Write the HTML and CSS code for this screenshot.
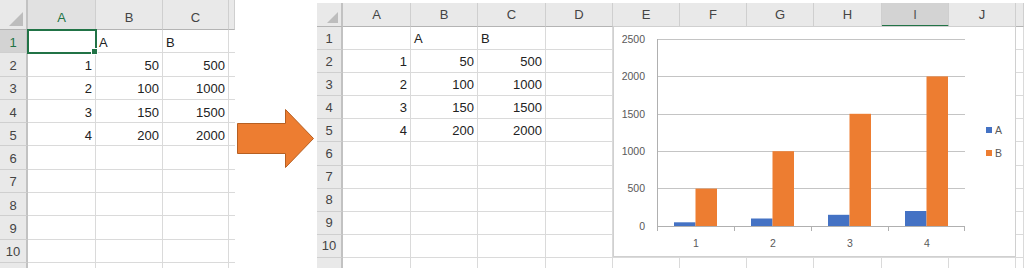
FILE: index.html
```html
<!DOCTYPE html>
<html lang="ja">
<head>
    <meta charset="UTF-8">
    <title>グラフの作成</title>
    <link rel="stylesheet" href="styles.css">
</head>
<body>
    <div class="page">
        <!-- 元のシート -->
        <div class="sheet sheet-before" id="sheet-before"></div>

        <!-- 矢印 -->
        <div class="gap">
            <svg width="82" height="268" viewBox="0 0 82 268">
                <path d="M2.5 123.5 H50.5 V109.5 L78.5 138.5 L50.5 167.5 V153.5 H2.5 Z" fill="#ed7d31" stroke="#b65f22" stroke-width="1"/>
            </svg>
        </div>

        <!-- グラフ付きのシート -->
        <div class="sheet sheet-after" id="sheet-after">
            <div class="chart">
                <svg width="403" height="231" viewBox="0 0 403 231">
                    <g class="grid">
                        <line x1="44" y1="13.5" x2="352" y2="13.5"/>
                        <line x1="44" y1="50.5" x2="352" y2="50.5"/>
                        <line x1="44" y1="88.5" x2="352" y2="88.5"/>
                        <line x1="44" y1="125.5" x2="352" y2="125.5"/>
                        <line x1="44" y1="162.5" x2="352" y2="162.5"/>
                    </g>
                    <g class="axis">
                        <line x1="44.5" y1="13" x2="44.5" y2="200"/>
                        <line x1="44" y1="200.5" x2="352" y2="200.5"/>
                        <line x1="44.5" y1="200" x2="44.5" y2="205"/>
                        <line x1="121.5" y1="200" x2="121.5" y2="205"/>
                        <line x1="198.5" y1="200" x2="198.5" y2="205"/>
                        <line x1="275.5" y1="200" x2="275.5" y2="205"/>
                        <line x1="351.5" y1="200" x2="351.5" y2="205"/>
                    </g>
                    <g class="bars-a">
                        <rect x="61" y="196.3" width="21.5" height="3.7"/>
                        <rect x="138" y="192.5" width="21.5" height="7.5"/>
                        <rect x="215" y="188.8" width="21.5" height="11.2"/>
                        <rect x="292" y="185" width="21.5" height="15"/>
                    </g>
                    <g class="bars-b">
                        <rect x="82.5" y="162.6" width="21.5" height="37.4"/>
                        <rect x="159.5" y="125.2" width="21.5" height="74.8"/>
                        <rect x="236.5" y="87.8" width="21.5" height="112.2"/>
                        <rect x="313.5" y="50.4" width="21.5" height="149.6"/>
                    </g>
                    <g class="labels-y">
                        <text x="32" y="17">2500</text>
                        <text x="32" y="54">2000</text>
                        <text x="32" y="92">1500</text>
                        <text x="32" y="129">1000</text>
                        <text x="32" y="166">500</text>
                        <text x="32" y="204">0</text>
                    </g>
                    <g class="labels-x">
                        <text x="83" y="221">1</text>
                        <text x="160" y="221">2</text>
                        <text x="237" y="221">3</text>
                        <text x="314" y="221">4</text>
                    </g>
                    <g class="legend">
                        <rect class="key-a" x="373" y="101" width="6" height="6"/>
                        <text x="382" y="108">A</text>
                        <rect class="key-b" x="373" y="124" width="6" height="6"/>
                        <text x="382" y="131">B</text>
                    </g>
                </svg>
            </div>
        </div>
    </div>

    <script>
        // Построение листов
        const letters = 'ABCDEFGHIJK'.split('');
        const data = [
            ['', 'A', 'B'],
            [1, 50, 500],
            [2, 100, 1000],
            [3, 150, 1500],
            [4, 200, 2000]
        ];

        function makeCell(cls, text) {
            const div = document.createElement('div');
            div.className = cls;
            if (text !== undefined && text !== '') div.textContent = text;
            return div;
        }

        // rowCount строк с номерами + одна обрезанная строка снизу
        function buildSheet(sheet, colCount, labelCount, rowCount, opts) {
            const frag = document.createDocumentFragment();
            frag.appendChild(makeCell('hd corner'));
            for (let c = 0; c < colCount; c++) {
                let cls = 'hd col-hd';
                if (opts.selCol === c) cls += ' sel';
                frag.appendChild(makeCell(cls, c < labelCount ? letters[c] : ''));
            }
            for (let r = 1; r <= rowCount + 1; r++) {
                let cls = 'hd row-hd';
                if (opts.selRow === r) cls += ' sel';
                frag.appendChild(makeCell(cls, r <= rowCount ? r : ''));
                const row = data[r - 1] || [];
                for (let c = 0; c < colCount; c++) {
                    const value = row[c];
                    let cellCls = 'cell';
                    if (typeof value === 'number') cellCls += ' num';
                    if (opts.active && opts.active[0] === r && opts.active[1] === c) cellCls += ' active';
                    frag.appendChild(makeCell(cellCls, value));
                }
            }
            // график должен остаться поверх ячеек
            sheet.insertBefore(frag, sheet.firstChild);
        }

        buildSheet(document.getElementById('sheet-before'), 4, 3, 10, { selCol: 0, selRow: 1, active: [1, 0] });
        buildSheet(document.getElementById('sheet-after'), 11, 10, 10, { selCol: 8 });
    </script>
</body>
</html>
```

FILE: styles.css
```css
/* Основные стили */
body {
    margin: 0;
    background: #fff;
    font-family: 'Liberation Sans', Arial, sans-serif;
    color: #222;
}

.page {
    display: flex;
    width: 1024px;
    height: 268px;
    overflow: hidden;
}

/* Листы */
.sheet {
    display: grid;
    position: relative;
    overflow: hidden;
    font-size: 13px;
}

.sheet-before {
    width: 235px;
    height: 268px;
    grid-template-columns: 28px 68px 67px 66px 6px;
    grid-template-rows: 30px;
    grid-auto-rows: 23.3px;
}

.sheet-after {
    width: 707px;
    height: 265px;
    margin-top: 3px;
    grid-template-columns: 26px 68px 67px 68px 67px 67px 67px 67px 68px 67px 67px 8px;
    grid-template-rows: 24px;
    grid-auto-rows: 23.1px;
}

.gap {
    width: 82px;
    flex-shrink: 0;
}

.gap svg {
    display: block;
}

/* Заголовки */
.hd {
    box-sizing: border-box;
    display: flex;
    align-items: center;
    justify-content: center;
    background: #e9e9e9;
    color: #444;
    border-right: 1px solid #cfcfcf;
    border-bottom: 1px solid #cfcfcf;
}

.col-hd {
    border-bottom: 1px solid #b4b4b4;
}

.sheet-before .col-hd {
    padding-top: 6px;
}

.sheet-before .row-hd {
    padding-top: 2px;
}

.row-hd {
    border-right: 2px solid #c2c2c2;
}

.corner {
    position: relative;
    border-bottom: 1px solid #b4b4b4;
    border-right: 2px solid #c2c2c2;
}

.corner::after {
    content: '';
    position: absolute;
    right: 3px;
    bottom: 3px;
    width: 14px;
    height: 14px;
    background: #bdbdbd;
    clip-path: polygon(100% 0, 100% 100%, 0 100%);
}

.sheet-after .corner::after {
    width: 11px;
    height: 11px;
}

.hd.sel {
    background: #d3d3d3;
    color: #217346;
}

.sheet-after .col-hd.sel {
    color: #555;
    border-bottom: 2px solid #217346;
}

.sheet-before .col-hd.sel {
    background: #e1e1e1;
}

/* Ячейки */
.cell {
    box-sizing: border-box;
    display: flex;
    align-items: center;
    padding: 2px 3px 0;
    border-right: 1px solid #dadada;
    border-bottom: 1px solid #dadada;
    white-space: nowrap;
    overflow: hidden;
}

.sheet-after .cell {
    padding-top: 0;
}

.cell.num {
    justify-content: flex-end;
}

.cell.active {
    position: relative;
    overflow: visible;
    outline: 2px solid #217346;
    outline-offset: -1px;
    z-index: 1;
}

.cell.active::after {
    content: '';
    position: absolute;
    right: -3px;
    bottom: -3px;
    width: 5px;
    height: 5px;
    background: #217346;
    border: 1px solid #fff;
}

/* Диаграмма */
.chart {
    position: absolute;
    left: 296px;
    top: 23px;
    width: 403px;
    height: 231px;
    box-sizing: border-box;
    background: #fff;
    border: 1px solid #d0d0d0;
    z-index: 2;
}

.chart svg {
    display: block;
    position: absolute;
    left: -1px;
    top: -1px;
}

.chart .grid line {
    stroke: #c4c4c4;
    stroke-width: 1;
}

.chart .axis line {
    stroke: #b0b0b0;
    stroke-width: 1;
}

.chart .bars-a rect,
.chart .key-a {
    fill: #4472c4;
}

.chart .bars-b rect,
.chart .key-b {
    fill: #ed7d31;
}

.chart text {
    font-family: 'Liberation Sans', Arial, sans-serif;
    font-size: 10.5px;
    fill: #595959;
}

.chart .labels-y text {
    text-anchor: end;
}

.chart .labels-x text {
    text-anchor: middle;
}
```
